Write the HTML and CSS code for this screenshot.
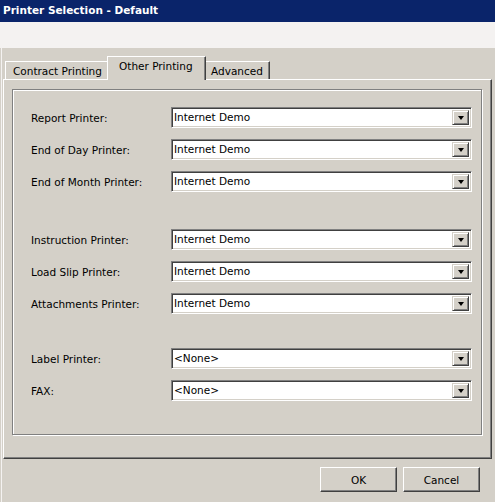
FILE: index.html
```html
<!DOCTYPE html>
<html>
<head>
<meta charset="utf-8">
<link rel="stylesheet" href="styles.css">
</head>
<body>
<div class="window">
  <div class="titlebar">Printer Selection - Default</div>
  <div class="band"></div>
  <div class="content">
    <div class="tabs">
      <div class="tab">Contract Printing</div>
      <div class="tab active">Other Printing</div>
      <div class="tab last">Advanced</div>
    </div>
    <div class="panel">
      <div class="group">
        <div class="section">
          <div class="row"><span class="label">Report Printer:</span><div class="combo"><span class="value">Internet Demo</span><span class="drop"><i></i></span></div></div>
          <div class="row"><span class="label">End of Day Printer:</span><div class="combo"><span class="value">Internet Demo</span><span class="drop"><i></i></span></div></div>
          <div class="row"><span class="label">End of Month Printer:</span><div class="combo"><span class="value">Internet Demo</span><span class="drop"><i></i></span></div></div>
        </div>
        <div class="section second">
          <div class="row"><span class="label">Instruction Printer:</span><div class="combo"><span class="value">Internet Demo</span><span class="drop"><i></i></span></div></div>
          <div class="row"><span class="label">Load Slip Printer:</span><div class="combo"><span class="value">Internet Demo</span><span class="drop"><i></i></span></div></div>
          <div class="row"><span class="label">Attachments Printer:</span><div class="combo"><span class="value">Internet Demo</span><span class="drop"><i></i></span></div></div>
        </div>
        <div class="section third">
          <div class="row"><span class="label">Label Printer:</span><div class="combo"><span class="value">&lt;None&gt;</span><span class="drop"><i></i></span></div></div>
          <div class="row"><span class="label">FAX:</span><div class="combo"><span class="value">&lt;None&gt;</span><span class="drop"><i></i></span></div></div>
        </div>
      </div>
    </div>
    <div class="buttons">
      <div class="btn">OK</div>
      <div class="btn">Cancel</div>
    </div>
  </div>
</div>
</body>
</html>
```

FILE: styles.css
```css
html, body {
  margin: 0;
  padding: 0;
  background: #d4d0c8;
}
body {
  width: 495px;
  height: 502px;
  overflow: hidden;
  font-family: "DejaVu Sans", sans-serif;
  font-size: 10.5px;
  color: #000;
}
.window {
  display: flex;
  flex-direction: column;
  height: 502px;
}
.titlebar {
  height: 22px;
  line-height: 21px;
  background: #0a246a;
  color: #fff;
  font-weight: bold;
  padding-left: 3px;
  box-sizing: border-box;
}
.band {
  height: 26px;
  background: #f4f2f1;
}
.content {
  flex: 1;
  margin-left: 1px;
  border-left: 1px solid #f4f2f1;
  padding-left: 1px;
  padding-top: 8px;
  width: 489px;
}
.tabs {
  display: flex;
  align-items: flex-end;
  height: 23px;
  padding-left: 2px;
  position: relative;
  z-index: 1;
}
.tab {
  height: 18px;
  box-sizing: border-box;
  border-top: 1px solid #fff;
  border-left: 1px solid #fff;
  border-right: 1px solid #404040;
  box-shadow: inset -1px 0 0 #808080;
  padding: 2px 6px 0 7px;
  line-height: 15px;
  white-space: nowrap;
}
.tab:first-child {
  width: 104px;
}
.tab.active {
  height: 24px;
  margin-bottom: -1px;
  margin-left: -2px;
  margin-right: -2px;
  width: 99px;
  padding: 2px 0 0 11px;
  background: #d4d0c8;
  position: relative;
  z-index: 2;
}
.tab.last {
  width: 66px;
  padding-left: 6px;
}
.panel {
  height: 380px;
  box-sizing: border-box;
  border-top: 1px solid #fff;
  border-left: 1px solid #fff;
  border-right: 1px solid #404040;
  border-bottom: 1px solid #404040;
  box-shadow: inset -1px -1px 0 #808080;
  padding: 9px 0 0 8px;
}
.group {
  width: 470px;
  height: 346px;
  box-sizing: border-box;
  border: 1px solid #808080;
  box-shadow: inset 1px 1px 0 #fff, 1px 1px 0 #fff;
  padding: 17px 0 0 18px;
  display: flex;
  flex-direction: column;
}
.section {
  display: flex;
  flex-direction: column;
  gap: 11px;
}
.section.second {
  margin-top: 37px;
}
.section.third {
  margin-top: 34px;
}
.row {
  display: flex;
  align-items: center;
  height: 21px;
}
.label {
  width: 140px;
  flex: none;
}
.combo {
  width: 301px;
  height: 21px;
  box-sizing: border-box;
  border-top: 1px solid #808080;
  border-left: 1px solid #808080;
  border-right: 1px solid #fff;
  border-bottom: 1px solid #fff;
  box-shadow: inset 1px 1px 0 #404040, inset -1px -1px 0 #d4d0c8;
  background: #fff;
  display: flex;
  align-items: stretch;
  padding: 2px;
}
.value {
  flex: 1;
  line-height: 15px;
  padding-left: 0;
}
.drop {
  width: 17px;
  flex: none;
  box-sizing: border-box;
  background: #d4d0c8;
  border-top: 1px solid #d4d0c8;
  border-left: 1px solid #d4d0c8;
  border-right: 1px solid #404040;
  border-bottom: 1px solid #404040;
  box-shadow: inset 1px 1px 0 #fff, inset -1px -1px 0 #808080;
  display: flex;
  align-items: center;
  justify-content: center;
}
.drop i {
  display: block;
  width: 0;
  height: 0;
  border-left: 3.5px solid transparent;
  border-right: 3.5px solid transparent;
  border-top: 4px solid #000;
  margin-top: 1px;
}
.buttons {
  display: flex;
  justify-content: flex-end;
  gap: 6px;
  padding: 8px 12px 0 0;
}
.btn {
  width: 77px;
  height: 25px;
  box-sizing: border-box;
  border-top: 1px solid #fff;
  border-left: 1px solid #fff;
  border-right: 1px solid #404040;
  border-bottom: 1px solid #404040;
  box-shadow: inset -1px -1px 0 #808080;
  display: flex;
  align-items: center;
  justify-content: center;
}
```
